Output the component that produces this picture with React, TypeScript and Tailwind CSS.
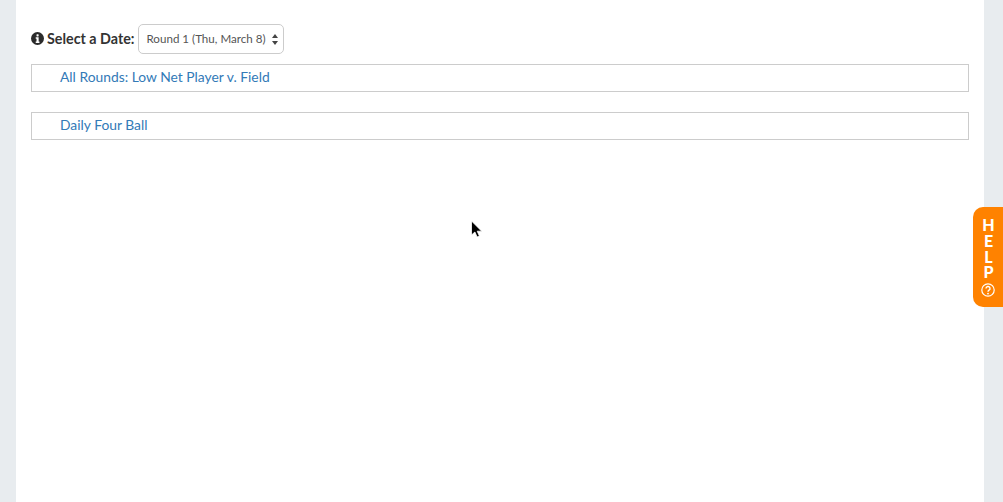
import React from 'react';

const rows = ['All Rounds: Low Net Player v. Field', 'Daily Four Ball'];

const App: React.FC = () => {
  return (
    <div className="relative h-[502px] w-[1003px] overflow-hidden bg-[#e8ecef] font-['Lato','Liberation_Sans',sans-serif]">
      <div className="mx-4 h-full w-[968px] bg-white px-[15px] pt-6">
        {/* Date picker */}
        <div className="flex h-[30px] items-center">
          <svg width="13" height="13" viewBox="0 0 16 16" className="mr-[3px] mb-[1px] text-[#2b2b2b]">
            <circle cx="8" cy="8" r="8" fill="currentColor" />
            <rect x="6.8" y="2.8" width="2.6" height="2.6" rx="0.6" fill="#fff" />
            <path d="M5.8 6.6h3.6v5.2h1v1.6H5.8v-1.6h1V8.2h-1z" fill="#fff" />
          </svg>
          <span className="mb-[1px] text-[14.3px] font-bold text-[#333]">Select a Date:</span>
          <div className="ml-1 flex h-[30px] w-[146px] items-center justify-between rounded-[5px] border border-[#ccc] pl-[7px] pr-[5px]">
            <span className="text-[11.6px] text-[#555]">Round 1 (Thu, March 8)</span>
            <svg width="6" height="11" viewBox="0 0 6 11" className="text-[#444]">
              <path d="M3 0l3 4H0zM3 11L0 7h6z" fill="currentColor" />
            </svg>
          </div>
        </div>

        {/* Bet rows */}
        <div className="mt-[10px] flex flex-col gap-5">
          {rows.map(row => (
            <div key={row} className="flex h-7 items-center border border-[#ccc] pb-[2px] pl-7">
              <span className="text-[13.85px] text-[#337ab7]">{row}</span>
            </div>
          ))}
        </div>
      </div>

      {/* Help tab */}
      <div className="absolute left-[973px] top-[207px] flex h-[100px] w-[30px] flex-col items-center rounded-l-[10px] bg-[#ff8200] pt-2 text-white">
        <span className="h-[66px] text-[16px] font-black leading-[16px] tracking-[-3.2px] [text-orientation:upright] [writing-mode:vertical-lr]">HELP</span>
        <svg width="14" height="14" viewBox="0 0 14 14" className="mt-[2px]">
          <circle cx="7" cy="7" r="6.2" fill="none" stroke="currentColor" strokeWidth="1.2" />
          <path d="M5 5.5a2 2 0 1 1 3 1.7c-.7.4-1 .8-1 1.5" fill="none" stroke="currentColor" strokeWidth="1.4" />
          <circle cx="7" cy="10.6" r="0.9" fill="currentColor" />
        </svg>
      </div>

      {/* Mouse cursor */}
      <svg width="14" height="20" viewBox="0 0 14 20" className="absolute left-[470px] top-[220px]">
        <path d="M1.5 1v14l3.4-3 2.2 5 2.3-1-2.2-4.8h4.5z" fill="#000" stroke="#fff" strokeWidth="0.8" />
      </svg>
    </div>
  );
};

export default App;
